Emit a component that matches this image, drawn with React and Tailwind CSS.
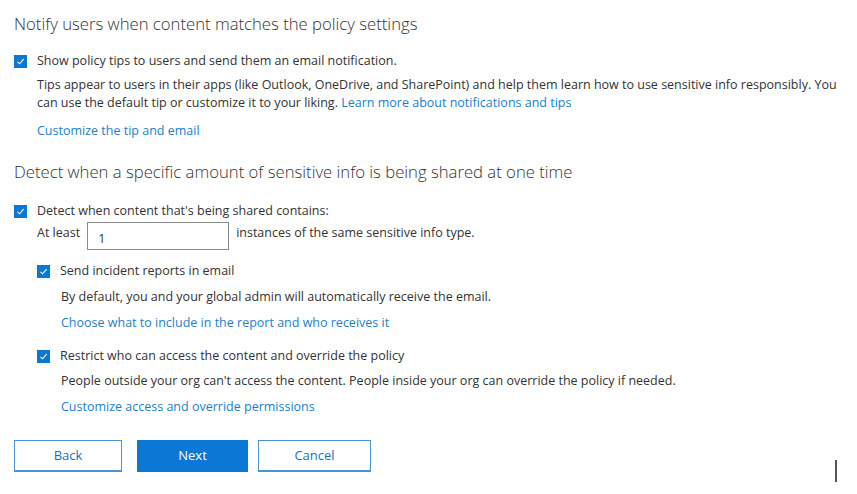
import React, { useState } from 'react';

const font = { fontFamily: '"Open Sans", "Noto Sans", Arial, sans-serif' };

const Check = ({ checked, onChange }) => (
  <button
    onClick={onChange}
    className={`w-[13px] h-[13px] flex items-center justify-center shrink-0 ${
      checked ? 'bg-[#0a78d4]' : 'border border-[#666] bg-white'
    }`}
  >
    {checked && (
      <svg width="9" height="9" viewBox="0 0 9 9" fill="none">
        <path d="M1.5 4.8 L3.6 6.8 L7.6 2.2" stroke="white" strokeWidth="1.1" />
      </svg>
    )}
  </button>
);

const Link = ({ children }) => (
  <a href="#" className="text-[#1a7fd0] hover:underline">
    {children}
  </a>
);

export default function App() {
  const [tips, setTips] = useState(true);
  const [detect, setDetect] = useState(true);
  const [reports, setReports] = useState(true);
  const [restrict, setRestrict] = useState(true);
  const [count, setCount] = useState('1');

  return (
    <div
      className="w-[857px] h-[494px] bg-white text-[#333] text-[12.5px] pl-[14px] pt-[13px] relative overflow-hidden"
      style={font}
    >
      <h2 className="text-[16.7px] font-light text-[#333] leading-[22px]">
        Notify users when content matches the policy settings
      </h2>

      <div className="flex items-center gap-[10px] mt-[18px] h-[16px]">
        <Check checked={tips} onChange={() => setTips(!tips)} />
        <span>Show policy tips to users and send them an email notification.</span>
      </div>
      <div className="pl-[23px] w-[828px] leading-[18px] mt-[7px]">
        <p>
          Tips appear to users in their apps (like Outlook, OneDrive, and SharePoint) and help them learn how to use
          sensitive info responsibly. You can use the default tip or customize it to your liking.{' '}
          <Link>Learn more about notifications and tips</Link>
        </p>
        <p className="mt-[10px]">
          <Link>Customize the tip and email</Link>
        </p>
      </div>

      <h2 className="text-[16.7px] font-light text-[#333] leading-[22px] mt-[21px]">
        Detect when a specific amount of sensitive info is being shared at one time
      </h2>

      <div className="flex items-center gap-[10px] mt-[20px] h-[16px]">
        <Check checked={detect} onChange={() => setDetect(!detect)} />
        <span>Detect when content that's being shared contains:</span>
      </div>
      <div className="pl-[23px]">
        <div className="flex items-center gap-[7px] mt-[3px]">
          <span className="-mt-[5px]">At least</span>
          <input
            value={count}
            onChange={(e) => setCount(e.target.value)}
            className="w-[142px] h-[28px] border border-[#8a8a8a] px-[10px] pt-[4px] text-[12.5px] outline-none"
            style={font}
          />
          <span className="-mt-[5px]">instances of the same sensitive info type.</span>
        </div>

        <div className="flex items-center gap-[10px] mt-[13px] h-[16px]">
          <Check checked={reports} onChange={() => setReports(!reports)} />
          <span>Send incident reports in email</span>
        </div>
        <div className="pl-[24px] leading-[18px] mt-[9px]">
          <p>By default, you and your global admin will automatically receive the email.</p>
          <p className="mt-[8px]">
            <Link>Choose what to include in the report and who receives it</Link>
          </p>
        </div>

        <div className="flex items-center gap-[10px] mt-[16px] h-[16px]">
          <Check checked={restrict} onChange={() => setRestrict(!restrict)} />
          <span>Restrict who can access the content and override the policy</span>
        </div>
        <div className="pl-[24px] leading-[18px] mt-[8px]">
          <p>People outside your org can't access the content. People inside your org can override the policy if needed.</p>
          <p className="mt-[8px]">
            <Link>Customize access and override permissions</Link>
          </p>
        </div>
      </div>

      <div className="flex mt-[24px]">
        <button className="w-[108px] h-[32px] border border-[#4a93d6] border-b-2 text-[#1a6fc0] bg-white text-[13px]">
          Back
        </button>
        <button className="w-[111px] h-[32px] ml-[15px] bg-[#0a78d4] text-white text-[13px]">Next</button>
        <button className="w-[113px] h-[32px] ml-[10px] border border-[#4a93d6] border-b-2 text-[#1a6fc0] bg-white text-[13px]">
          Cancel
        </button>
      </div>

      <div className="absolute left-[835px] top-[460px] w-[2px] h-[22px] bg-[#555]" />
    </div>
  );
}
